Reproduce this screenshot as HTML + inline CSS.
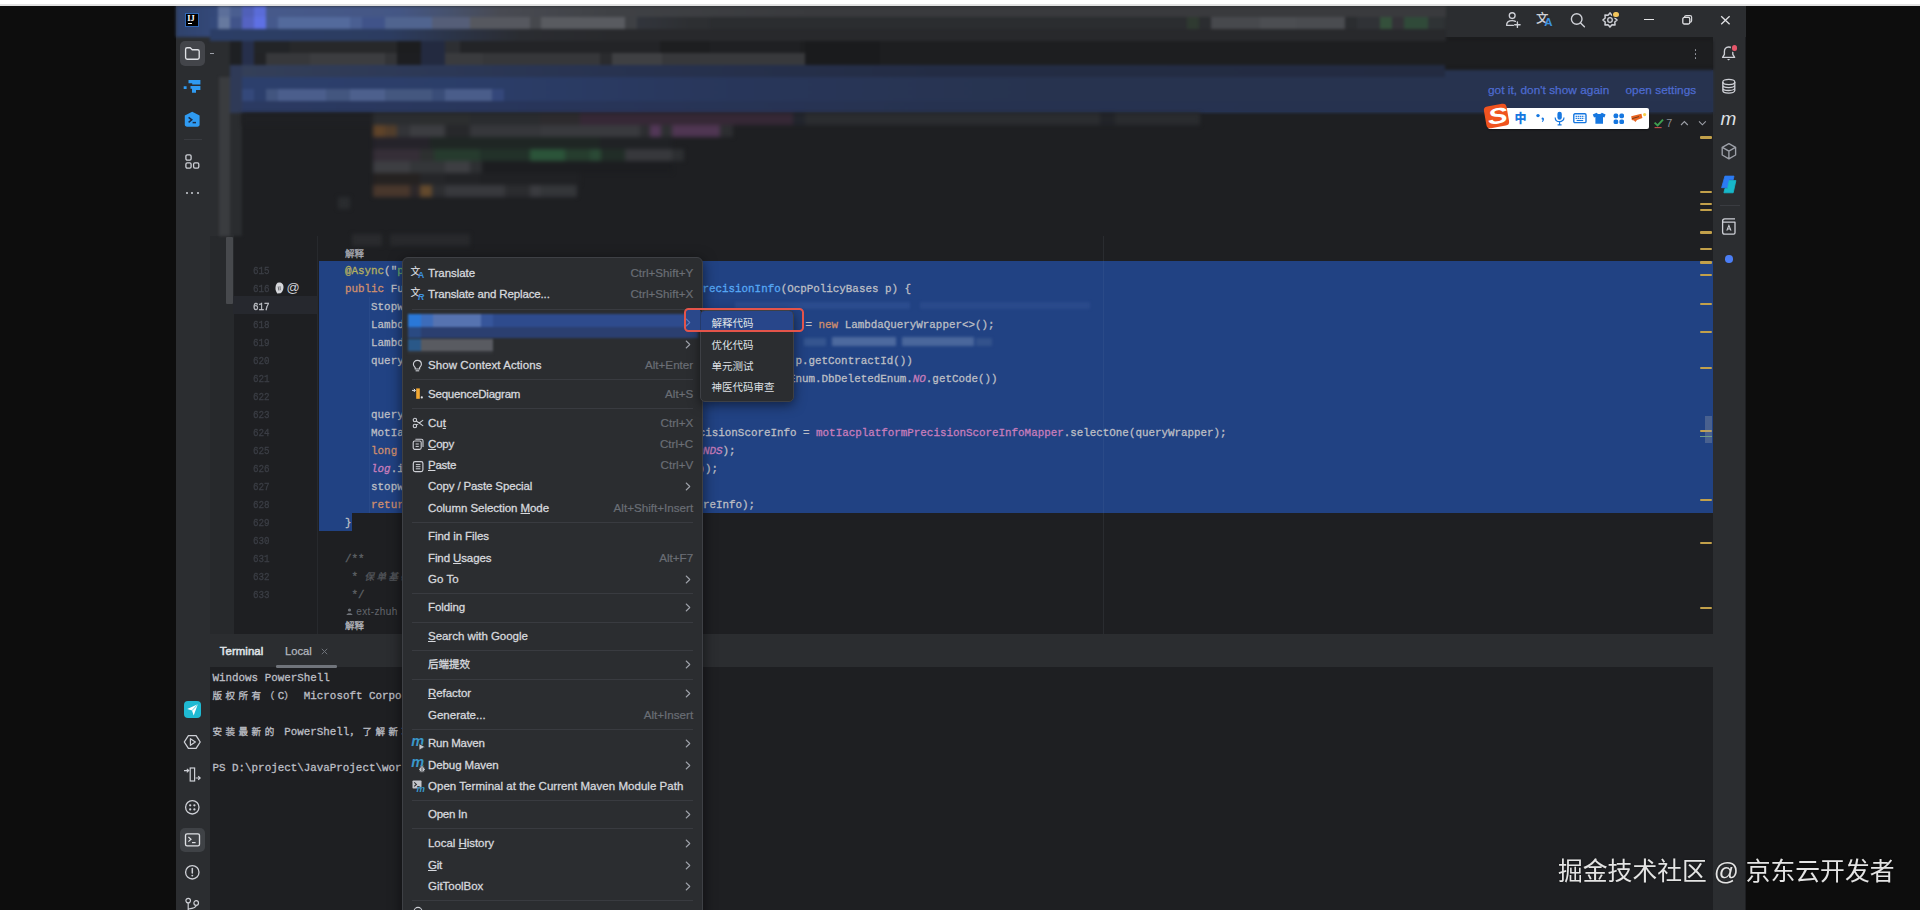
<!DOCTYPE html><html lang="zh"><head><meta charset="utf-8"><title>IDE</title><style>html,body{margin:0;padding:0}
body{width:1920px;height:910px;background:#0d0d0d;overflow:hidden;position:relative;font-family:"Liberation Sans","Noto Sans CJK SC",sans-serif;}
div,span,svg{position:absolute;box-sizing:border-box}
.t{white-space:pre;line-height:1}
.mono{font-family:"Liberation Mono","Noto Sans CJK SC",monospace;font-size:10.87px;white-space:pre;line-height:18px;height:18px;color:#bcbec4;-webkit-text-stroke:.3px}
.mi{font-size:11.5px;color:#d6d8dd;-webkit-text-stroke:.3px #d6d8dd;white-space:pre;line-height:14px;height:14px;left:428px}
.sc{font-size:11.65px;color:#6a6e75;-webkit-text-stroke:.2px #6a6e75;white-space:pre;line-height:14px;height:14px;right:1226.8px;text-align:right}
.sep{left:412px;width:281px;height:1px;background:#393b40}
.ln{font-family:"Liberation Mono",monospace;font-size:11px;color:#3f434a;left:252.6px;line-height:18px;height:18px;white-space:pre;transform:scaleX(.84);transform-origin:left center;margin-top:.6px;-webkit-text-stroke:.3px}
u{text-decoration-thickness:1px;text-underline-offset:1px}
</style></head><body>
<div id="all" style="left:0;top:0;width:1920px;height:910px;filter:blur(.35px)">
<div  style="left:175.5px;top:5.5px;width:1570px;height:905px;background:#1e1f22;"></div>
<div  style="left:175.5px;top:5.5px;width:1570px;height:31.5px;background:#2b2d30;"></div>
<div  style="left:175.5px;top:37px;width:34px;height:873px;background:#2b2d30;"></div>
<div  style="left:1712.5px;top:37px;width:32.5px;height:873px;background:#2b2d30;"></div>
<div  style="left:209.5px;top:37px;width:24px;height:597px;background:#2b2d30;"></div>
<div  style="left:210px;top:236px;width:23.5px;height:397.5px;background:#27292c;"></div>
<div  style="left:233px;top:37px;width:1479.5px;height:33px;background:#1b1c1e;"></div>
<div  style="left:233px;top:70px;width:1479.5px;height:42px;background:#27334f;"></div>
<div style="left:0;top:0;width:1920px;height:260px;filter:blur(1.8px)">
<div style="left:209.5px;top:5.5px;width:1236px;height:11.5px;background:linear-gradient(90deg,#364b7c 0,#46598a 60px,#445684 190px,#46526f 235px,#484a52 290px,#3f4145 400px,#393a3d 600px,#393a3d 100%)"></div>
<div  style="left:217.5px;top:5.5px;width:12.5px;height:11.5px;background:#5c6f9a;"></div>
<div  style="left:230px;top:5.5px;width:12px;height:11.5px;background:#4a5e90;"></div>
<div  style="left:242px;top:5.5px;width:12px;height:11.5px;background:#5060b8;"></div>
<div  style="left:254px;top:5.5px;width:12px;height:11.5px;background:#5a6cd8;"></div>
<div style="left:175.5px;top:5.5px;width:42px;height:31.5px;background:linear-gradient(90deg,#2f426b,#34497a)"></div>
<div style="left:209.5px;top:17px;width:500px;height:12px;background:linear-gradient(90deg,#34497a 0,#3a4f80 200px,#3a3f4e 330px,#2d2f32 480px)"></div>
<div  style="left:217.5px;top:17px;width:12.5px;height:12px;background:#66799f;"></div>
<div  style="left:230px;top:17px;width:12px;height:12px;background:#41548a;"></div>
<div  style="left:242px;top:17px;width:12px;height:12px;background:#5563c2;"></div>
<div  style="left:254px;top:17px;width:12px;height:12px;background:#5e70e4;"></div>
<div  style="left:266px;top:17px;width:11.5px;height:12px;background:#45598c;"></div>
<div  style="left:277.5px;top:17px;width:72.5px;height:12px;background:#536a9c;"></div>
<div  style="left:350px;top:17px;width:12px;height:12px;background:#4a5f92;"></div>
<div  style="left:362px;top:17px;width:23px;height:12px;background:#405389;"></div>
<div  style="left:385px;top:17px;width:47px;height:12px;background:#50648f;"></div>
<div  style="left:432px;top:17px;width:38px;height:12px;background:#555e78;"></div>
<div  style="left:470px;top:17px;width:60px;height:12px;background:#56585f;"></div>
<div  style="left:530px;top:17px;width:11px;height:12px;background:#46484d;"></div>
<div  style="left:541px;top:17px;width:84px;height:12px;background:#595b60;"></div>
<div  style="left:625px;top:17px;width:12px;height:12px;background:#3e4044;"></div>
<div  style="left:1187px;top:17px;width:12px;height:12px;background:#2f3a31;"></div>
<div  style="left:1211px;top:17px;width:49px;height:12px;background:#47494d;"></div>
<div  style="left:1260px;top:17px;width:36px;height:12px;background:#4c4e52;"></div>
<div  style="left:1296px;top:17px;width:49px;height:12px;background:#4a4c50;"></div>
<div  style="left:1357px;top:17px;width:23px;height:12px;background:#303236;"></div>
<div  style="left:1380px;top:17px;width:12px;height:12px;background:#34503b;"></div>
<div  style="left:1392px;top:17px;width:12px;height:12px;background:#333237;"></div>
<div  style="left:1404px;top:17px;width:24px;height:12px;background:#304a39;"></div>
<div  style="left:1428px;top:17px;width:17px;height:12px;background:#2f3335;"></div>
<div  style="left:500px;top:29px;width:946px;height:12px;background:#28292c;"></div>
<div style="left:209.5px;top:29px;width:700px;height:12px;background:linear-gradient(90deg,#2c3e66 0,#2c3c60 180px,#2b3345 250px,#2a2c31 310px,#28292c 400px)"></div>
<div  style="left:233px;top:41px;width:1479.5px;height:12px;background:#1d1e20;"></div>
<div  style="left:230px;top:41px;width:12px;height:12px;background:#1e2023;"></div>
<div  style="left:242px;top:41px;width:12px;height:12px;background:#262f4b;"></div>
<div  style="left:254px;top:41px;width:36px;height:12px;background:#222427;"></div>
<div  style="left:290px;top:41px;width:107px;height:12px;background:#27282a;"></div>
<div  style="left:397px;top:41px;width:24px;height:12px;background:#1c1d1f;"></div>
<div  style="left:421px;top:41px;width:24px;height:12px;background:#232a40;"></div>
<div  style="left:445px;top:41px;width:15px;height:12px;background:#2d2f33;"></div>
<div  style="left:460px;top:41px;width:200px;height:12px;background:#232427;"></div>
<div  style="left:710px;top:41px;width:90px;height:12px;background:#1f2023;"></div>
<div  style="left:805px;top:41px;width:75px;height:12px;background:#1a1b1d;"></div>
<div  style="left:233px;top:53px;width:1479.5px;height:12px;background:#1d1e20;"></div>
<div  style="left:230px;top:53px;width:12px;height:12px;background:#1e2023;"></div>
<div  style="left:242px;top:53px;width:12px;height:12px;background:#262f4b;"></div>
<div  style="left:254px;top:53px;width:12px;height:12px;background:#222326;"></div>
<div  style="left:266px;top:53px;width:44px;height:12px;background:#37383b;"></div>
<div  style="left:310px;top:53px;width:75px;height:12px;background:#3c3d40;"></div>
<div  style="left:385px;top:53px;width:12px;height:12px;background:#333437;"></div>
<div  style="left:397px;top:53px;width:24px;height:12px;background:#1d1e21;"></div>
<div  style="left:421px;top:53px;width:24px;height:12px;background:#232a40;"></div>
<div  style="left:445px;top:53px;width:37px;height:12px;background:#3a3b3e;"></div>
<div  style="left:482px;top:53px;width:118px;height:12px;background:#36373a;"></div>
<div  style="left:600px;top:53px;width:12px;height:12px;background:#2a2b2e;"></div>
<div  style="left:612px;top:53px;width:50px;height:12px;background:#3f4043;"></div>
<div  style="left:662px;top:53px;width:38px;height:12px;background:#37383b;"></div>
<div  style="left:700px;top:53px;width:105px;height:12px;background:#38393c;"></div>
<div  style="left:805px;top:53px;width:75px;height:12px;background:#1a1b1d;"></div>
<div style="left:233px;top:65px;width:1479.5px;height:12px;background:linear-gradient(90deg,#343f58 0,#2c3856 200px,#27324f 400px,#232c44 700px,#222a3f 100%)"></div>
<div style="left:1445px;top:65px;width:267.5px;height:5px;background:#1b1c1e"></div>
<div style="left:1445px;top:70px;width:267.5px;height:7px;background:#27334f"></div>
<div style="left:233px;top:77px;width:1479.5px;height:35.5px;background:linear-gradient(90deg,#2c3f6c 0,#2b3d68 250px,#28365a 500px,#27334f 800px)"></div>
<div  style="left:242px;top:89px;width:12px;height:12px;background:#34487a;"></div>
<div  style="left:266px;top:89px;width:12px;height:12px;background:#42557f;"></div>
<div  style="left:278px;top:89px;width:48px;height:12px;background:#4b5e8c;"></div>
<div  style="left:326px;top:89px;width:24px;height:12px;background:#43567f;"></div>
<div  style="left:350px;top:89px;width:35px;height:12px;background:#4d608d;"></div>
<div  style="left:385px;top:89px;width:47px;height:12px;background:#44577f;"></div>
<div  style="left:432px;top:89px;width:13px;height:12px;background:#3a4d78;"></div>
<div  style="left:445px;top:89px;width:47px;height:12px;background:#4a5d8a;"></div>
<div  style="left:492px;top:89px;width:12px;height:12px;background:#34477a;"></div>
<div style="left:233px;top:101px;width:1479.5px;height:11.5px;background:linear-gradient(90deg,#2b3a62 0,#28355a 300px,#263250 700px,#26324e 100%)"></div>
<div  style="left:218.5px;top:77px;width:11.5px;height:159px;background:#3a3c3f;"></div>
<div  style="left:230px;top:65px;width:12px;height:48px;background:#2f3a57;"></div>
<div  style="left:230px;top:113px;width:12px;height:123px;background:#2a2c2f;"></div>
</div>
<div style="left:0;top:0;width:1920px;height:260px;filter:blur(1.9px)">
<div  style="left:242px;top:113px;width:131px;height:12px;background:#1f2023;"></div>
<div  style="left:373px;top:113px;width:47px;height:12px;background:#2b2d30;"></div>
<div  style="left:420px;top:113px;width:50px;height:12px;background:#2c2e2f;"></div>
<div  style="left:470px;top:113px;width:70px;height:12px;background:#2a2c2f;"></div>
<div  style="left:540px;top:113px;width:40px;height:12px;background:#2d2b2e;"></div>
<div  style="left:580px;top:113px;width:213px;height:12px;background:#362836;"></div>
<div  style="left:793px;top:113px;width:12px;height:12px;background:#22252d;"></div>
<div  style="left:805px;top:113px;width:295px;height:12px;background:#2b2d30;"></div>
<div  style="left:1100px;top:113px;width:15px;height:12px;background:#222429;"></div>
<div  style="left:1115px;top:113px;width:85px;height:12px;background:#2a2c2f;"></div>
<div  style="left:373px;top:125px;width:12px;height:12px;background:#5f4329;"></div>
<div  style="left:385px;top:125px;width:12px;height:12px;background:#513d2b;"></div>
<div  style="left:397px;top:125px;width:13px;height:12px;background:#333438;"></div>
<div  style="left:410px;top:125px;width:35px;height:12px;background:#3c3d41;"></div>
<div  style="left:445px;top:125px;width:25px;height:12px;background:#27282b;"></div>
<div  style="left:470px;top:125px;width:71px;height:12px;background:#36373b;"></div>
<div  style="left:541px;top:125px;width:99px;height:12px;background:#393a3e;"></div>
<div  style="left:640px;top:125px;width:10px;height:12px;background:#2d2e31;"></div>
<div  style="left:650px;top:125px;width:11px;height:12px;background:#523757;"></div>
<div  style="left:661px;top:125px;width:11px;height:12px;background:#2e3032;"></div>
<div  style="left:672px;top:125px;width:48px;height:12px;background:#4f3652;"></div>
<div  style="left:720px;top:125px;width:13px;height:12px;background:#2d2e31;"></div>
<div  style="left:373px;top:137px;width:57px;height:12px;background:#25232a;"></div>
<div  style="left:430px;top:137px;width:170px;height:12px;background:#1f2624;"></div>
<div  style="left:600px;top:137px;width:72px;height:12px;background:#202225;"></div>
<div  style="left:373px;top:149px;width:47px;height:12px;background:#352e37;"></div>
<div  style="left:420px;top:149px;width:14px;height:12px;background:#2d3030;"></div>
<div  style="left:434px;top:149px;width:46px;height:12px;background:#263b2e;"></div>
<div  style="left:480px;top:149px;width:50px;height:12px;background:#223129;"></div>
<div  style="left:530px;top:149px;width:35px;height:12px;background:#2b5439;"></div>
<div  style="left:565px;top:149px;width:25px;height:12px;background:#263d2e;"></div>
<div  style="left:590px;top:149px;width:11px;height:12px;background:#2a4935;"></div>
<div  style="left:601px;top:149px;width:24px;height:12px;background:#212d27;"></div>
<div  style="left:625px;top:149px;width:47px;height:12px;background:#37383c;"></div>
<div  style="left:672px;top:149px;width:12px;height:12px;background:#2d2f32;"></div>
<div  style="left:373px;top:161px;width:37px;height:12px;background:#3d3e42;"></div>
<div  style="left:410px;top:161px;width:35px;height:12px;background:#343639;"></div>
<div  style="left:445px;top:161px;width:25px;height:12px;background:#3d3e42;"></div>
<div  style="left:470px;top:161px;width:12px;height:12px;background:#2d2f32;"></div>
<div  style="left:482px;top:161px;width:190px;height:12px;background:#1c1d20;"></div>
<div  style="left:373px;top:173px;width:47px;height:12px;background:#252221;"></div>
<div  style="left:420px;top:173px;width:25px;height:12px;background:#252629;"></div>
<div  style="left:445px;top:173px;width:35px;height:12px;background:#222326;"></div>
<div  style="left:480px;top:173px;width:100px;height:12px;background:#202124;"></div>
<div  style="left:373px;top:185px;width:37px;height:12px;background:#48372c;"></div>
<div  style="left:410px;top:185px;width:10px;height:12px;background:#2d282a;"></div>
<div  style="left:420px;top:185px;width:12px;height:12px;background:#63492d;"></div>
<div  style="left:432px;top:185px;width:13px;height:12px;background:#2d2e31;"></div>
<div  style="left:445px;top:185px;width:60px;height:12px;background:#38393d;"></div>
<div  style="left:505px;top:185px;width:25px;height:12px;background:#2b2c2f;"></div>
<div  style="left:530px;top:185px;width:11px;height:12px;background:#3a3b3f;"></div>
<div  style="left:541px;top:185px;width:36px;height:12px;background:#343639;"></div>
<div  style="left:338px;top:197px;width:12px;height:12px;background:#2a2c2f;"></div>
<div  style="left:352px;top:234px;width:30px;height:12px;background:#2a2b2e;"></div>
<div  style="left:390px;top:234px;width:80px;height:12px;background:#28292c;"></div>
</div>
<div  style="left:0px;top:0px;width:1920px;height:4px;background:#ffffff;"></div>
<div  style="left:0px;top:3.5px;width:1920px;height:2px;background:#e2e2e2;"></div>
<div  style="left:233px;top:296.4px;width:85.2px;height:18px;background:#26282e;"></div>
<div  style="left:316.8px;top:236px;width:1px;height:397.5px;background:#27292d;"></div>
<div  style="left:225.6px;top:237px;width:7px;height:66.6px;background:#47494d;border-radius:1px"></div>
<div  style="left:318.5px;top:260.5px;width:1394px;height:252.5px;background:#214283;"></div>
<div  style="left:318.5px;top:513px;width:33.5px;height:18px;background:#214283;"></div>
<div  style="left:1103px;top:236px;width:1px;height:397.5px;background:#2a2c30;"></div>
<div  style="left:1103px;top:260.5px;width:1px;height:252.5px;background:#2a4a88;"></div>
<div  style="left:369.4px;top:296.5px;width:1px;height:216.0px;background:#284989;"></div>
<div class="ln" style="top:261.5px;color:#3b3e45">615</div>
<div class="ln" style="top:279.5px;color:#3b3e45">616</div>
<div class="ln" style="top:297.5px;color:#c3c5cb">617</div>
<div class="ln" style="top:315.5px;color:#3b3e45">618</div>
<div class="ln" style="top:333.5px;color:#3b3e45">619</div>
<div class="ln" style="top:351.5px;color:#3b3e45">620</div>
<div class="ln" style="top:369.5px;color:#3b3e45">621</div>
<div class="ln" style="top:387.5px;color:#3b3e45">622</div>
<div class="ln" style="top:405.5px;color:#3b3e45">623</div>
<div class="ln" style="top:423.5px;color:#3b3e45">624</div>
<div class="ln" style="top:441.5px;color:#3b3e45">625</div>
<div class="ln" style="top:459.5px;color:#3b3e45">626</div>
<div class="ln" style="top:477.5px;color:#3b3e45">627</div>
<div class="ln" style="top:495.5px;color:#3b3e45">628</div>
<div class="ln" style="top:513.5px;color:#3b3e45">629</div>
<div class="ln" style="top:531.5px;color:#3b3e45">630</div>
<div class="ln" style="top:549.5px;color:#3b3e45">631</div>
<div class="ln" style="top:567.5px;color:#3b3e45">632</div>
<div class="ln" style="top:585.5px;color:#3b3e45">633</div>
<svg style="left:274px;top:282px" width="11" height="12" viewBox="0 0 11 12"><path d="M5 0.5 C8 0.5 9.8 2.5 9.5 5.5 C9.3 8 8.5 10 6.5 11.3 L3.2 11.5 C2.5 9.5 1.2 8.5 1.5 5.5 C1.7 2.5 2.8 0.5 5 0.5Z" fill="#d5d6da"/><path d="M4.2 4.5 l0.6 4 M6 4.2 l0.3 4" stroke="#55575c" stroke-width="0.8"/></svg>
<div class="t" style="left:286.5px;top:281px;font-size:13px;color:#ced0d6;font-family:'Liberation Sans',sans-serif">@</div>
<div class="t" style="left:345px;top:249.2px;font-size:9.5px;color:#a9abb2;-webkit-text-stroke:.3px;font-family:'Liberation Sans','Noto Sans CJK SC',sans-serif">解释</div>
<div class="t" style="left:345px;top:620.6px;font-size:9.5px;color:#b4b6bc;-webkit-text-stroke:.3px;font-family:'Liberation Sans','Noto Sans CJK SC',sans-serif">解释</div>
<svg style="left:346px;top:608px" width="7" height="7" viewBox="0 0 7 7"><circle cx="3.5" cy="2" r="1.6" fill="#6f737a"/><path d="M0.5 7 C0.5 4.5 6.5 4.5 6.5 7Z" fill="#6f737a"/></svg>
<div class="t" style="left:356.2px;top:607px;font-size:10px;color:#63666c;letter-spacing:.4px">ext-zhuh</div>
<div class="mono" style="left:345.00px;top:261.5px"><span style="position:static;color:#b3ae60;">@Async</span>(&quot;<span style="position:static;color:#6aab73;">precisionExecutor</span></div>
<div class="mono" style="left:345.00px;top:279.5px"><span style="position:static;color:#cf8e6d;">public</span> Future&lt;Mot</div>
<div class="mono" style="left:371.08px;top:297.5px">Stopwatch sw</div>
<div class="mono" style="left:371.08px;top:315.5px">LambdaQuery</div>
<div class="mono" style="left:371.08px;top:333.5px">LambdaQuery</div>
<div class="mono" style="left:371.08px;top:351.5px">queryWrapp</div>
<div class="mono" style="left:371.08px;top:405.5px">queryWrapp</div>
<div class="mono" style="left:371.08px;top:423.5px">MotIacplat</div>
<div class="mono" style="left:371.08px;top:441.5px"><span style="position:static;color:#cf8e6d;">long</span> cost</div>
<div class="mono" style="left:371.08px;top:459.5px"><span style="position:static;color:#c77dbb;font-style:italic;">log</span>.info(</div>
<div class="mono" style="left:371.08px;top:477.5px">stopwatch</div>
<div class="mono" style="left:371.08px;top:495.5px"><span style="position:static;color:#cf8e6d;">return</span> new</div>
<div class="mono" style="left:345.00px;top:513.5px">}</div>
<div class="mono" style="left:345.00px;top:549.5px"><span style="position:static;color:#5e6266;">/**</span></div>
<div class="mono" style="left:345.00px;top:567.5px"><span style="position:static;color:#5e6266;"> * </span><i style="color:#53565b;font-size:9.5px;letter-spacing:2.5px">保单基础信息</i></div>
<div class="mono" style="left:345.00px;top:585.5px"><span style="position:static;color:#5e6266;"> */</span></div>
<div class="mono" style="left:695.98px;top:279.5px"><span style="position:static;color:#56a8f5;">PrecisionInfo</span>(OcpPolicyBases p) {</div>
<div class="mono" style="left:805.50px;top:315.5px">= <span style="position:static;color:#cf8e6d;">new</span> LambdaQueryWrapper&lt;&gt;();</div>
<div class="mono" style="left:795.50px;top:351.5px">p.getContractId())</div>
<div class="mono" style="left:788.98px;top:369.5px">Enum.DbDeletedEnum.<span style="position:static;color:#c77dbb;font-style:italic;">NO</span>.getCode())</div>
<div class="mono" style="left:698.78px;top:423.5px">cisionScoreInfo = <span style="position:static;color:#c77dbb;">motIacplatformPrecisionScoreInfoMapper</span>.selectOne(queryWrapper);</div>
<div class="mono" style="left:696.48px;top:441.5px"><span style="position:static;color:#c77dbb;font-style:italic;">ONDS</span>);</div>
<div class="mono" style="left:698.50px;top:459.5px">));</div>
<div class="mono" style="left:696.48px;top:495.5px">oreInfo);</div>
<div style="left:0;top:0;width:1920px;height:520px;filter:blur(1.6px)">
<div  style="left:735px;top:302px;width:175px;height:7px;background:#2b4c8e;"></div>
<div  style="left:920px;top:302px;width:170px;height:7px;background:#2a4a8b;"></div>
<div  style="left:804px;top:338px;width:22px;height:8px;background:#35558f;"></div>
<div  style="left:832px;top:337px;width:64px;height:9px;background:#4d6a9f;"></div>
<div  style="left:902px;top:337px;width:72px;height:9px;background:#4a679c;"></div>
<div  style="left:976px;top:338px;width:16px;height:8px;background:#33528c;"></div>
</div>
<div  style="left:209.5px;top:633.5px;width:1503px;height:33.3px;background:#2b2d30;"></div>
<div  style="left:209.5px;top:666.8px;width:1503px;height:243.2px;background:#1e1f22;"></div>
<div class="t" style="left:219.8px;top:645.8px;font-size:11.4px;color:#dfe1e5;-webkit-text-stroke:.55px #dfe1e5;letter-spacing:.05px">Terminal</div>
<div class="t" style="left:285px;top:646px;font-size:11.2px;color:#b4b8bf;-webkit-text-stroke:.25px">Local</div>
<svg style="left:320.8px;top:648.4px" width="7" height="7" viewBox="0 0 7 7"><path d="M0.8 0.8 L6.2 6.2 M6.2 0.8 L0.8 6.2" stroke="#6f737a" stroke-width="1"/></svg>
<div  style="left:276.2px;top:665.3px;width:60.7px;height:2.6px;background:#70747b;border-radius:1.3px"></div>
<div class="mono" style="left:212.5px;top:668.8px;color:#bcbec4">Windows PowerShell</div>
<div class="mono" style="left:212.5px;top:686.8px;color:#bcbec4"><span style="position:static;font-size:9.5px;letter-spacing:3.54px">版权所有（</span>C<span style="position:static;font-size:9.5px;letter-spacing:3.54px">）</span> Microsoft Corporation</div>
<div class="mono" style="left:212.5px;top:722.8px;color:#bcbec4"><span style="position:static;font-size:9.5px;letter-spacing:3.54px">安装最新的</span> PowerShell<span style="position:static;font-size:9.5px;letter-spacing:3.54px">，了解新功能</span></div>
<div class="mono" style="left:212.5px;top:758.8px;color:#bcbec4">PS D:\project\JavaProject\work</div>
<div style="left:185px;top:13px;width:14px;height:14px;background:#000;border:1px solid #2f66b5"></div>
<div class="t" style="left:187.3px;top:14.8px;font-size:8.4px;font-weight:bold;color:#fff;font-family:'Liberation Serif',serif;letter-spacing:-.1px">IJ</div>
<div  style="left:187.5px;top:22.6px;width:4.5px;height:1.2px;background:#fff;"></div>
<div  style="left:180px;top:41px;width:25px;height:25px;background:#43454a;border-radius:5px"></div>
<svg style="left:184px;top:46px" width="17" height="15" viewBox="0 0 17 15"><path d="M1.6 3.2 C1.6 2.3 2.3 1.7 3.1 1.7 H6.2 L8.2 3.7 H13.6 C14.5 3.7 15.2 4.4 15.2 5.2 V11.6 C15.2 12.5 14.5 13.2 13.6 13.2 H3.1 C2.3 13.2 1.6 12.5 1.6 11.6 Z" fill="none" stroke="#dfe1e5" stroke-width="1.35" stroke-linejoin="round"/></svg>
<div  style="left:210px;top:53px;width:3.5px;height:1.2px;background:#9da0a8;"></div>
<svg style="left:183px;top:79px" width="18" height="15" viewBox="0 0 18 15"><path d="M5.5 1 H17.4 V5.6 H9.2 V4.2 H5.5 Z M7.5 7 H17.4 V11 H13 V13.8 H9 V9.8 H7.5 Z M0.7 7.2 H3.6 V10 H0.7 Z" fill="#2f9bf2"/></svg>
<svg style="left:184px;top:111px" width="17" height="17" viewBox="0 0 17 17"><path d="M8.2 0.8 L15.6 4.6 V13.6 C15.6 14.9 14.7 15.8 13.4 15.8 H3 C1.7 15.8 0.8 14.9 0.8 13.6 V4.6 Z" fill="#2f9bf2"/><path d="M4.6 6.3 L7.8 8.8 L4.6 11.3" fill="none" stroke="#1c2b45" stroke-width="1.5"/><path d="M8.6 11.6 H12" stroke="#1c2b45" stroke-width="1.5"/></svg>
<div  style="left:183.5px;top:139px;width:18.5px;height:1px;background:#393b40;"></div>
<svg style="left:184px;top:152.5px" width="17" height="17" viewBox="0 0 17 17"><rect x="1.9" y="1.9" width="5.2" height="5.2" rx="1.3" fill="none" stroke="#ced0d6" stroke-width="1.3"/><rect x="1.9" y="9.9" width="5.2" height="5.2" rx="1.3" fill="none" stroke="#ced0d6" stroke-width="1.3"/><rect x="9.6" y="9.9" width="5.2" height="5.2" rx="1.3" fill="none" stroke="#ced0d6" stroke-width="1.3"/></svg>
<div style="left:185.5px;top:192.3px;width:2.2px;height:2.2px;border-radius:50%;background:#ced0d6"></div>
<div style="left:191.0px;top:192.3px;width:2.2px;height:2.2px;border-radius:50%;background:#ced0d6"></div>
<div style="left:196.5px;top:192.3px;width:2.2px;height:2.2px;border-radius:50%;background:#ced0d6"></div>
<div  style="left:183.5px;top:700.5px;width:17px;height:17px;background:#1fbad3;border-radius:4px"></div>
<svg style="left:183.5px;top:700.5px" width="17" height="17" viewBox="0 0 17 17"><path d="M13.8 3.3 L3.2 7.9 L8 9.6 L9.7 14.4 Z" fill="#fff"/><path d="M13.8 3.3 L8 9.6" stroke="#1fbad3" stroke-width="0.7"/></svg>
<svg style="left:183px;top:733.5px" width="18.5" height="16" viewBox="0 0 18.5 16"><path d="M5.4 1.6 H13.1 L17.2 8 L13.1 14.4 H5.4 L1.3 8 Z" fill="none" stroke="#ced0d6" stroke-width="1.3" stroke-linejoin="round"/><path d="M7.4 4.7 L12.4 8 L7.4 11.3 Z" fill="none" stroke="#ced0d6" stroke-width="1.2" stroke-linejoin="round"/></svg>
<svg style="left:183px;top:766px" width="18.5" height="17" viewBox="0 0 18.5 17"><rect x="7.2" y="2" width="4.4" height="13" fill="none" stroke="#ced0d6" stroke-width="1.2"/><path d="M1 4.6 H5.6 M3.8 2.8 L5.8 4.6 L3.8 6.4" fill="none" stroke="#ced0d6" stroke-width="1.1"/><path d="M12.6 12 H17 M15.2 10.2 L17.2 12 L15.2 13.8" fill="none" stroke="#ced0d6" stroke-width="1.1"/></svg>
<svg style="left:184px;top:799px" width="17" height="17" viewBox="0 0 17 17"><circle cx="8.3" cy="8.3" r="6.7" fill="none" stroke="#ced0d6" stroke-width="1.3"/><g fill="#ced0d6"><circle cx="6.2" cy="6.3" r="1.15"/><circle cx="10.4" cy="6.3" r="1.15"/><circle cx="6.2" cy="10.4" r="1.15"/><circle cx="10.4" cy="10.4" r="1.15"/></g></svg>
<div  style="left:180px;top:827.5px;width:24.5px;height:24.5px;background:#3f4246;border-radius:5px"></div>
<svg style="left:184px;top:832px" width="17" height="16" viewBox="0 0 17 16"><rect x="1.5" y="1.8" width="14" height="12" rx="1.6" fill="none" stroke="#dfe1e5" stroke-width="1.35"/><path d="M4.4 5 L7 7.3 L4.4 9.6" fill="none" stroke="#dfe1e5" stroke-width="1.2"/><path d="M8 10.6 H11.6" stroke="#dfe1e5" stroke-width="1.2"/></svg>
<svg style="left:184px;top:863.5px" width="17" height="17" viewBox="0 0 17 17"><circle cx="8.3" cy="8.3" r="6.7" fill="none" stroke="#ced0d6" stroke-width="1.3"/><path d="M8.3 4.4 V9" stroke="#ced0d6" stroke-width="1.5" stroke-linecap="round"/><circle cx="8.3" cy="11.6" r="0.95" fill="#ced0d6"/></svg>
<svg style="left:184px;top:896px" width="17" height="14" viewBox="0 0 17 14"><circle cx="4.2" cy="4.6" r="2.3" fill="none" stroke="#ced0d6" stroke-width="1.2"/><circle cx="12.2" cy="7" r="2.3" fill="none" stroke="#ced0d6" stroke-width="1.2"/><path d="M4.2 7 V14 M12.2 9.3 C12.2 12 8 12.6 4.6 13" fill="none" stroke="#ced0d6" stroke-width="1.2"/></svg>
<svg style="left:1504px;top:11px" width="18" height="18" viewBox="0 0 18 18"><circle cx="8.2" cy="4.6" r="2.9" fill="none" stroke="#ced0d6" stroke-width="1.35"/><path d="M2.6 14.3 C2.6 10.4 5.4 9.6 8.2 9.6 C9.6 9.6 10.6 9.9 11.4 10.4 M2.6 14.3 H9.4" fill="none" stroke="#ced0d6" stroke-width="1.35" stroke-linecap="round"/><path d="M13.4 11 V16.4 M10.7 13.7 H16.1" stroke="#ced0d6" stroke-width="1.35" stroke-linecap="round"/></svg>
<div class="t" style="left:1536px;top:12px;font-size:12.5px;color:#ced0d6;font-family:'Noto Sans CJK SC',sans-serif;font-weight:500">文</div>
<div class="t" style="left:1544.3px;top:17.2px;font-size:11.5px;color:#3d93e0;font-weight:bold;font-family:'Liberation Sans',sans-serif;text-shadow:0 0 1.5px #2b2d30">A</div>
<svg style="left:1568px;top:10px" width="18" height="18" viewBox="0 0 18 18"><circle cx="8.7" cy="9" r="5.3" fill="none" stroke="#ced0d6" stroke-width="1.4"/><path d="M12.6 12.9 L16.4 16.7" stroke="#ced0d6" stroke-width="1.4" stroke-linecap="round"/></svg>
<svg style="left:1601px;top:11px" width="18" height="18" viewBox="0 0 18 18"><path d="M9.00 1.90 L10.99 4.20 L14.02 3.98 L13.80 7.01 L16.10 9.00 L13.80 10.99 L14.02 14.02 L10.99 13.80 L9.00 16.10 L7.01 13.80 L3.98 14.02 L4.20 10.99 L1.90 9.00 L4.20 7.01 L3.98 3.98 L7.01 4.20Z" fill="none" stroke="#ced0d6" stroke-width="1.5" stroke-linejoin="round"/><circle cx="9" cy="9" r="2.3" fill="none" stroke="#ced0d6" stroke-width="1.3"/></svg>
<div style="left:1613.2px;top:11.7px;width:5.6px;height:5.6px;border-radius:50%;background:#f2c55c;box-shadow:0 0 0 1px #2b2d30"></div>
<div  style="left:1644px;top:18.8px;width:9.5px;height:1.4px;background:#e4e4e6;"></div>
<svg style="left:1681px;top:14px" width="13" height="12" viewBox="0 0 13 12"><rect x="3.6" y="1.6" width="7" height="6.6" rx="1.5" fill="none" stroke="#d6d7da" stroke-width="1.2"/><rect x="1.8" y="3.4" width="7" height="6.6" rx="1.5" fill="#2b2d30" stroke="#e0e1e4" stroke-width="1.3"/></svg>
<svg style="left:1720px;top:15px" width="11" height="11" viewBox="0 0 11 11"><path d="M1.2 1.2 L9.6 9.2 M9.6 1.2 L1.2 9.2" stroke="#e0e1e4" stroke-width="1.3"/></svg>
<div style="left:1694.7px;top:49.1px;width:1.8px;height:1.8px;border-radius:50%;background:#9da0a8"></div>
<div style="left:1694.7px;top:53.1px;width:1.8px;height:1.8px;border-radius:50%;background:#9da0a8"></div>
<div style="left:1694.7px;top:57.1px;width:1.8px;height:1.8px;border-radius:50%;background:#9da0a8"></div>
<div class="t" style="left:1488px;top:84.5px;font-size:11.8px;color:#4d6bd0;-webkit-text-stroke:.25px;letter-spacing:.04px">got it, don't show again</div>
<div class="t" style="left:1625.5px;top:84.5px;font-size:11.8px;color:#4d6bd0;-webkit-text-stroke:.25px;letter-spacing:.04px">open settings</div>
<svg style="left:1720px;top:45px" width="18" height="17" viewBox="0 0 18 17"><path d="M8.6 2 C5.6 2 4.4 4.2 4.4 6.6 V9.4 L2.6 12.4 H14.6 L12.8 9.4 V6.6 C12.8 4.2 11.6 2 8.6 2Z" fill="none" stroke="#ced0d6" stroke-width="1.35" stroke-linejoin="round"/><path d="M7 14 L8.6 15.6 L10.2 14Z" fill="#ced0d6"/></svg>
<div style="left:1731.7px;top:45.4px;width:5.4px;height:5.4px;border-radius:50%;background:#e5566a;box-shadow:0 0 0 1.2px #2b2d30"></div>
<svg style="left:1720px;top:78px" width="18" height="17" viewBox="0 0 18 17"><ellipse cx="8.8" cy="4" rx="6" ry="2.6" fill="none" stroke="#ced0d6" stroke-width="1.3"/><path d="M2.8 4 V12.6 C2.8 14 5.5 15.2 8.8 15.2 C12.1 15.2 14.8 14 14.8 12.6 V4 M2.8 7 C2.8 8.4 5.5 9.6 8.8 9.6 C12.1 9.6 14.8 8.4 14.8 7 M2.8 9.9 C2.8 11.3 5.5 12.5 8.8 12.5 C12.1 12.5 14.8 11.3 14.8 9.9" fill="none" stroke="#ced0d6" stroke-width="1.3"/></svg>
<div class="t" style="left:1720.6px;top:108.6px;font-size:19px;font-style:italic;color:#dfe1e5;font-family:'Liberation Sans',sans-serif">m</div>
<svg style="left:1720px;top:142px" width="18" height="19" viewBox="0 0 18 19"><path d="M8.9 1.6 L15.6 5.3 V13 L8.9 16.8 L2.2 13 V5.3 Z M2.4 5.4 L8.9 9.2 L15.4 5.4 M8.9 9.2 V16.6" fill="none" stroke="#9da0a8" stroke-width="1.35" stroke-linejoin="round"/></svg>
<svg style="left:1716px;top:170px" width="26" height="30" viewBox="0 0 26 30"><path d="M8.9 6.1 H18 L17.2 9.8 H13.4 L11.7 17.7 H5.6 Z" fill="#2b7bf3" stroke="#2b7bf3" stroke-width="0.8" stroke-linejoin="round"/><path d="M13.2 10.6 H19.9 L17.2 22.8 H7.9 L8.9 18.6 H11.5 Z" fill="#17b7c9" stroke="#17b7c9" stroke-width="0.8" stroke-linejoin="round"/></svg>
<div  style="left:1720px;top:205px;width:20px;height:1px;background:#3a3c41;"></div>
<svg style="left:1720px;top:217px" width="18" height="19" viewBox="0 0 18 19"><path d="M2.6 4 C2.6 2.7 3.5 1.8 4.8 1.8 H15 M2.6 4 V15 C2.6 16.3 3.5 17.2 4.8 17.2 H13.6 C14.5 17.2 15 16.7 15 15.8 V5.2 H4.4 C3.4 5.2 2.6 4.8 2.6 4" fill="none" stroke="#ced0d6" stroke-width="1.3" stroke-linejoin="round"/><path d="M6.8 13.6 L8.9 8.4 L11 13.6 M7.6 12 H10.2" fill="none" stroke="#ced0d6" stroke-width="1.1"/></svg>
<div style="left:1725px;top:255px;width:7.6px;height:7.6px;border-radius:50%;background:#4b7ef5"></div>
<div  style="left:1488px;top:107.6px;width:160.6px;height:21.2px;background:#ffffff;border-radius:2px;box-shadow:0 1px 2px rgba(0,0,0,.4)"></div>
<div style="left:1484.6px;top:105px;width:23px;height:22px;background:#f0531f;border-radius:4px;transform:rotate(-10deg)"></div>
<div class="t" style="left:1486.3px;top:105.6px;font-size:22px;font-weight:bold;font-style:italic;color:#fff;font-family:'Liberation Sans',sans-serif;transform:rotate(-8deg) scaleX(1.36);transform-origin:left top;line-height:23px">S</div>
<div class="t" style="left:1514.6px;top:111.2px;font-size:12px;font-weight:900;color:#1677e0;font-family:'Noto Sans CJK SC',sans-serif;line-height:14px">中</div>
<svg style="left:1535px;top:112px" width="12" height="12" viewBox="0 0 12 12"><circle cx="3" cy="3.6" r="1.7" fill="#1677e0"/><path d="M7.6 5.4 C9.4 5.4 9.6 8.4 7.4 10 L6.8 9.4 C7.8 8.6 7.8 7.8 7.2 7.6 C6.2 7.2 6.4 5.4 7.6 5.4Z" fill="#1677e0"/></svg>
<svg style="left:1553px;top:111px" width="13" height="15" viewBox="0 0 13 15"><rect x="4.4" y="0.8" width="4.4" height="8" rx="2.2" fill="#1677e0"/><path d="M2.2 6.4 C2.2 12 11 12 11 6.4 M6.6 10.8 V13.6 M4.6 13.8 H8.6" fill="none" stroke="#1677e0" stroke-width="1.2"/></svg>
<svg style="left:1573px;top:113px" width="14" height="11" viewBox="0 0 14 11"><rect x="0.8" y="0.8" width="12.2" height="8.8" rx="1.2" fill="none" stroke="#1677e0" stroke-width="1.4"/><path d="M2.6 3.4 H11.2 M2.6 5.4 H11.2" stroke="#1677e0" stroke-width="1.1" stroke-dasharray="1.3 0.7"/><path d="M3.6 7.5 H10.2" stroke="#1677e0" stroke-width="1.1"/></svg>
<svg style="left:1592px;top:112px" width="15" height="13" viewBox="0 0 15 13"><path d="M4.6 0.8 C5.4 2.4 9 2.4 9.8 0.8 L13.6 2.6 L12.4 5.6 L11 5 V11.8 H3.4 V5 L2 5.6 L0.8 2.6 Z" fill="#1677e0"/></svg>
<svg style="left:1613px;top:112.5px" width="12" height="12" viewBox="0 0 12 12"><rect x="0.6" y="0.6" width="4.6" height="4.6" rx="1.6" fill="#1677e0"/><rect x="6.4" y="0.6" width="4.6" height="4.6" rx="1.6" fill="#1677e0"/><rect x="0.6" y="6.4" width="4.6" height="4.6" rx="1.6" fill="#1677e0"/><rect x="6.4" y="6.4" width="4.6" height="4.6" rx="1.6" fill="#1677e0"/></svg>
<svg style="left:1630px;top:112px" width="19" height="12" viewBox="0 0 19 12"><path d="M1.2 4.2 L11.4 1.8 L12.4 6 L7 8 L5.4 10 L4 8.4 L1.8 8 Z" fill="#e8641f"/><path d="M2.2 6.6 L9 4.6" stroke="#7a3a18" stroke-width="1"/><circle cx="14.6" cy="2.6" r="1.6" fill="#f7d04a"/></svg>
<svg style="left:1653px;top:118px" width="12" height="11" viewBox="0 0 12 11"><path d="M1.6 4.6 L4.6 7.4 L10 1.6" fill="none" stroke="#3f9f50" stroke-width="1.9"/><path d="M1.6 9.6 H8.6" stroke="#c9504f" stroke-width="1.1"/></svg>
<div class="t" style="left:1666.2px;top:117.5px;font-size:10.8px;color:#8c8f96">7</div>
<svg style="left:1680px;top:119.5px" width="9" height="7" viewBox="0 0 9 7"><path d="M1 5 L4.4 1.6 L7.8 5" fill="none" stroke="#9da0a8" stroke-width="1.1"/></svg>
<svg style="left:1697.5px;top:120px" width="9" height="7" viewBox="0 0 9 7"><path d="M1 1.4 L4.4 4.8 L7.8 1.4" fill="none" stroke="#9da0a8" stroke-width="1.1"/></svg>
<div  style="left:1700px;top:136.3px;width:11.8px;height:2.3px;background:#c2a04a;border-radius:1px"></div>
<div  style="left:1700px;top:191.20000000000002px;width:11.8px;height:2.3px;background:#c2a04a;border-radius:1px"></div>
<div  style="left:1700px;top:202.5px;width:11.8px;height:2.3px;background:#c2a04a;border-radius:1px"></div>
<div  style="left:1700px;top:209.1px;width:11.8px;height:2.3px;background:#c2a04a;border-radius:1px"></div>
<div  style="left:1700px;top:231.4px;width:11.8px;height:2.3px;background:#c2a04a;border-radius:1px"></div>
<div  style="left:1700px;top:247.9px;width:11.8px;height:2.3px;background:#c2a04a;border-radius:1px"></div>
<div  style="left:1700px;top:261.29999999999995px;width:11.8px;height:2.3px;background:#c2a04a;border-radius:1px"></div>
<div  style="left:1700px;top:273.9px;width:11.8px;height:2.3px;background:#c2a04a;border-radius:1px"></div>
<div  style="left:1700px;top:302.9px;width:11.8px;height:2.3px;background:#c2a04a;border-radius:1px"></div>
<div  style="left:1700px;top:331.2px;width:11.8px;height:2.3px;background:#c2a04a;border-radius:1px"></div>
<div  style="left:1700px;top:366.59999999999997px;width:11.8px;height:2.3px;background:#c2a04a;border-radius:1px"></div>
<div  style="left:1700px;top:429.7px;width:11.8px;height:2.3px;background:#c2a04a;border-radius:1px"></div>
<div  style="left:1700px;top:499.2px;width:11.8px;height:2.3px;background:#c2a04a;border-radius:1px"></div>
<div  style="left:1700px;top:542.1999999999999px;width:11.8px;height:2.3px;background:#c2a04a;border-radius:1px"></div>
<div  style="left:1700px;top:606.9px;width:11.8px;height:2.3px;background:#c2a04a;border-radius:1px"></div>
<div  style="left:1704.5px;top:416px;width:7px;height:27px;background:rgba(150,155,165,.35);"></div>
<div  style="left:1700px;top:435.5px;width:11.8px;height:1.4px;background:#6f9a86;"></div>
<div style="left:401.5px;top:256.5px;width:301.5px;height:680px;background:#2b2d30;border:1px solid #3e4045;border-radius:6px;box-shadow:0 3px 14px rgba(0,0,0,.55)"></div>
<div class="mi" style="top:265.5px;letter-spacing:-0.05px">Translate</div>
<div class="sc" style="top:265.5px">Ctrl+Shift+Y</div>
<div class="mi" style="top:287.0px;letter-spacing:-0.13px">Translate and Replace...</div>
<div class="sc" style="top:287.0px">Ctrl+Shift+X</div>
<div class="sep" style="top:308.5px"></div>
<div style="left:402px;top:300px;width:300px;height:60px;overflow:hidden"><div style="left:0;top:0;width:300px;height:60px;filter:blur(1.3px)">
<div style="left:5.5px;top:14px;width:290px;height:13px;background:#2e4b8d"></div>
<div style="left:5.5px;top:27px;width:290px;height:10.5px;background:#2b3f70"></div>
<div style="left:5.5px;top:14px;width:13px;height:13px;background:#2a78d8"></div>
<div style="left:18.5px;top:14px;width:12px;height:13px;background:#3d6cba"></div>
<div style="left:30.5px;top:14px;width:48px;height:13px;background:#5673b0"></div>
<div style="left:78.5px;top:14px;width:12px;height:13px;background:#36559a"></div>
<div style="left:5.5px;top:27px;width:13px;height:10.5px;background:#2a4a82"></div>
<div style="left:5.5px;top:39px;width:13px;height:12px;background:#2a5888"></div>
<div style="left:18.5px;top:39px;width:72px;height:12px;background:#595b61"></div>
<div style="left:5.5px;top:51px;width:85px;height:3px;background:#323438"></div>
</div></div>
<svg style="left:684.5px;top:318.0px" width="6" height="9" viewBox="0 0 6 9"><path d="M1.2 1 L4.8 4.5 L1.2 8" fill="none" stroke="#6f8ac6" stroke-width="1.05" stroke-linecap="round" stroke-linejoin="round"/></svg>
<svg style="left:684.5px;top:340.0px" width="6" height="9" viewBox="0 0 6 9"><path d="M1.2 1 L4.8 4.5 L1.2 8" fill="none" stroke="#9fa2aa" stroke-width="1.05" stroke-linecap="round" stroke-linejoin="round"/></svg>
<div class="mi" style="top:358.0px;letter-spacing:0.08px">Show Context Actions</div>
<div class="sc" style="top:358.0px">Alt+Enter</div>
<div class="sep" style="top:379.0px"></div>
<div class="mi" style="top:386.5px;letter-spacing:-0.20px">SequenceDiagram</div>
<div class="sc" style="top:386.5px">Alt+S</div>
<div class="sep" style="top:408.0px"></div>
<div class="mi" style="top:415.5px;letter-spacing:-0.00px">Cu<u>t</u></div>
<div class="sc" style="top:415.5px">Ctrl+X</div>
<div class="mi" style="top:436.5px;letter-spacing:-0.19px"><u>C</u>opy</div>
<div class="sc" style="top:436.5px">Ctrl+C</div>
<div class="mi" style="top:458.0px;letter-spacing:-0.26px"><u>P</u>aste</div>
<div class="sc" style="top:458.0px">Ctrl+V</div>
<div class="mi" style="top:479.0px;letter-spacing:-0.13px">Copy / Paste Special</div>
<svg style="left:684.5px;top:482.0px" width="6" height="9" viewBox="0 0 6 9"><path d="M1.2 1 L4.8 4.5 L1.2 8" fill="none" stroke="#9fa2aa" stroke-width="1.05" stroke-linecap="round" stroke-linejoin="round"/></svg>
<div class="mi" style="top:500.5px;letter-spacing:-0.05px">Column Selection <u>M</u>ode</div>
<div class="sc" style="top:500.5px">Alt+Shift+Insert</div>
<div class="sep" style="top:521.8px"></div>
<div class="mi" style="top:529.0px;letter-spacing:-0.08px">Find in Files</div>
<div class="mi" style="top:550.5px;letter-spacing:-0.11px">Find <u>U</u>sages</div>
<div class="sc" style="top:550.5px">Alt+F7</div>
<div class="mi" style="top:571.5px;letter-spacing:0.04px">Go To</div>
<svg style="left:684.5px;top:574.5px" width="6" height="9" viewBox="0 0 6 9"><path d="M1.2 1 L4.8 4.5 L1.2 8" fill="none" stroke="#9fa2aa" stroke-width="1.05" stroke-linecap="round" stroke-linejoin="round"/></svg>
<div class="sep" style="top:593.0px"></div>
<div class="mi" style="top:600.0px;letter-spacing:-0.09px">Folding</div>
<svg style="left:684.5px;top:603.0px" width="6" height="9" viewBox="0 0 6 9"><path d="M1.2 1 L4.8 4.5 L1.2 8" fill="none" stroke="#9fa2aa" stroke-width="1.05" stroke-linecap="round" stroke-linejoin="round"/></svg>
<div class="sep" style="top:621.5px"></div>
<div class="mi" style="top:629.0px;letter-spacing:-0.03px"><u>S</u>earch with Google</div>
<div class="sep" style="top:650.0px"></div>
<div class="mi" style="top:657px;font-size:10.5px;font-family:'Liberation Sans','Noto Sans CJK SC',sans-serif">后端提效</div>
<svg style="left:684.5px;top:660.0px" width="6" height="9" viewBox="0 0 6 9"><path d="M1.2 1 L4.8 4.5 L1.2 8" fill="none" stroke="#9fa2aa" stroke-width="1.05" stroke-linecap="round" stroke-linejoin="round"/></svg>
<div class="sep" style="top:678.5px"></div>
<div class="mi" style="top:686.0px;letter-spacing:-0.06px"><u>R</u>efactor</div>
<svg style="left:684.5px;top:689.0px" width="6" height="9" viewBox="0 0 6 9"><path d="M1.2 1 L4.8 4.5 L1.2 8" fill="none" stroke="#9fa2aa" stroke-width="1.05" stroke-linecap="round" stroke-linejoin="round"/></svg>
<div class="mi" style="top:707.5px;letter-spacing:0.01px">Generate...</div>
<div class="sc" style="top:707.5px">Alt+Insert</div>
<div class="sep" style="top:728.5px"></div>
<div class="mi" style="top:736.0px;letter-spacing:-0.25px">Run Maven</div>
<svg style="left:684.5px;top:739.0px" width="6" height="9" viewBox="0 0 6 9"><path d="M1.2 1 L4.8 4.5 L1.2 8" fill="none" stroke="#9fa2aa" stroke-width="1.05" stroke-linecap="round" stroke-linejoin="round"/></svg>
<div class="mi" style="top:757.5px;letter-spacing:-0.09px">Debug Maven</div>
<svg style="left:684.5px;top:760.5px" width="6" height="9" viewBox="0 0 6 9"><path d="M1.2 1 L4.8 4.5 L1.2 8" fill="none" stroke="#9fa2aa" stroke-width="1.05" stroke-linecap="round" stroke-linejoin="round"/></svg>
<div class="mi" style="top:779.0px;letter-spacing:0.04px">Open Terminal at the Current Maven Module Path</div>
<div class="sep" style="top:800.0px"></div>
<div class="mi" style="top:807.0px;letter-spacing:-0.25px">Open In</div>
<svg style="left:684.5px;top:810.0px" width="6" height="9" viewBox="0 0 6 9"><path d="M1.2 1 L4.8 4.5 L1.2 8" fill="none" stroke="#9fa2aa" stroke-width="1.05" stroke-linecap="round" stroke-linejoin="round"/></svg>
<div class="sep" style="top:828.0px"></div>
<div class="mi" style="top:836.0px;letter-spacing:-0.04px">Local <u>H</u>istory</div>
<svg style="left:684.5px;top:839.0px" width="6" height="9" viewBox="0 0 6 9"><path d="M1.2 1 L4.8 4.5 L1.2 8" fill="none" stroke="#9fa2aa" stroke-width="1.05" stroke-linecap="round" stroke-linejoin="round"/></svg>
<div class="mi" style="top:857.5px;letter-spacing:-0.30px"><u>G</u>it</div>
<svg style="left:684.5px;top:860.5px" width="6" height="9" viewBox="0 0 6 9"><path d="M1.2 1 L4.8 4.5 L1.2 8" fill="none" stroke="#9fa2aa" stroke-width="1.05" stroke-linecap="round" stroke-linejoin="round"/></svg>
<div class="mi" style="top:878.5px;letter-spacing:-0.04px">GitToolBox</div>
<svg style="left:684.5px;top:881.5px" width="6" height="9" viewBox="0 0 6 9"><path d="M1.2 1 L4.8 4.5 L1.2 8" fill="none" stroke="#9fa2aa" stroke-width="1.05" stroke-linecap="round" stroke-linejoin="round"/></svg>
<div class="sep" style="top:899.5px"></div>
<div style="left:699.5px;top:310px;width:94px;height:91.5px;background:#2b2d30;border:1px solid #3e4045;border-radius:5px;box-shadow:0 3px 12px rgba(0,0,0,.5)"></div>
<div  style="left:686px;top:310px;width:14px;height:21.5px;background:#2a488b;"></div>
<div  style="left:700.5px;top:310.8px;width:92px;height:21.4px;background:#28468a;border-radius:4px 4px 0 0"></div>
<div  style="left:699.6px;top:310.5px;width:1px;height:21.5px;background:#253a6b;"></div>
<svg style="left:684.5px;top:318.0px" width="6" height="9" viewBox="0 0 6 9"><path d="M1.2 1 L4.8 4.5 L1.2 8" fill="none" stroke="#5f7cbd" stroke-width="1.05" stroke-linecap="round" stroke-linejoin="round"/></svg>
<div class="t" style="font-size:10.5px;color:#dfe1e5;font-family:'Liberation Sans','Noto Sans CJK SC',sans-serif;left:711.5px;line-height:14px;top:316.0px">解释代码</div>
<div class="t" style="font-size:10.5px;color:#dfe1e5;font-family:'Liberation Sans','Noto Sans CJK SC',sans-serif;left:711.5px;line-height:14px;top:337.5px">优化代码</div>
<div class="t" style="font-size:10.5px;color:#dfe1e5;font-family:'Liberation Sans','Noto Sans CJK SC',sans-serif;left:711.5px;line-height:14px;top:358.8px">单元测试</div>
<div class="t" style="font-size:10.5px;color:#dfe1e5;font-family:'Liberation Sans','Noto Sans CJK SC',sans-serif;left:711.5px;line-height:14px;top:380.1px">神医代码审查</div>
<div style="left:684.2px;top:307.8px;width:120px;height:24.6px;border:2.2px solid #e4544a;border-radius:4.5px"></div>
<div class="t" style="left:410.6px;top:265.8px;font-size:9.8px;color:#ced0d6;font-family:'Noto Sans CJK SC',sans-serif;font-weight:500;line-height:11px">文</div>
<div class="t" style="left:418px;top:271.4px;font-size:8.6px;color:#3d93e0;font-weight:bold;font-style:normal;font-family:'Liberation Sans',sans-serif;line-height:9px;text-shadow:0 0 1px #2b2d30">A</div>
<div class="t" style="left:410.6px;top:287.3px;font-size:9.8px;color:#ced0d6;font-family:'Noto Sans CJK SC',sans-serif;font-weight:500;line-height:11px">文</div>
<div class="t" style="left:418px;top:292.9px;font-size:8.6px;color:#3d93e0;font-weight:bold;font-style:italic;font-family:'Liberation Sans',sans-serif;line-height:9px;text-shadow:0 0 1px #2b2d30">R</div>
<svg style="left:411px;top:358.5px" width="13" height="14" viewBox="0 0 13 14"><path d="M6.4 1.4 C3.8 1.4 2.4 3.2 2.4 5.2 C2.4 6.8 3.4 7.6 4.2 8.6 V10 H8.6 V8.6 C9.4 7.6 10.4 6.8 10.4 5.2 C10.4 3.2 9 1.4 6.4 1.4Z" fill="none" stroke="#ced0d6" stroke-width="1.15"/><path d="M4.6 11.8 H8.2" stroke="#ced0d6" stroke-width="1.1"/></svg>
<svg style="left:411px;top:387px" width="14" height="13" viewBox="0 0 14 13"><rect x="5.2" y="1.4" width="3.6" height="10.4" fill="#f2a833"/><path d="M1 3.4 H4.2 M2.8 1.8 L4.4 3.4 L2.8 5" fill="none" stroke="#dfe1e5" stroke-width="1"/><circle cx="10.8" cy="10.4" r="1.1" fill="#dfe1e5"/></svg>
<svg style="left:411.5px;top:417px" width="12" height="12" viewBox="0 0 12 12"><circle cx="2.9" cy="3" r="1.7" fill="none" stroke="#ced0d6" stroke-width="1.1"/><circle cx="2.9" cy="9" r="1.7" fill="none" stroke="#ced0d6" stroke-width="1.1"/><path d="M4.3 4 L10.8 8.6 M4.3 8 L10.8 3.4" stroke="#ced0d6" stroke-width="1.1" stroke-linecap="round"/></svg>
<svg style="left:411.5px;top:437.5px" width="12" height="13" viewBox="0 0 12 13"><rect x="1.2" y="3" width="8" height="8.4" rx="1.6" fill="none" stroke="#ced0d6" stroke-width="1.1"/><path d="M3.4 1.2 H9.4 C10.4 1.2 11 1.8 11 2.8 V9" fill="none" stroke="#ced0d6" stroke-width="1.1"/><path d="M3.6 6 H6.8 M3.6 8.4 H6.8" stroke="#ced0d6" stroke-width="1"/></svg>
<svg style="left:411.5px;top:459.5px" width="12" height="13" viewBox="0 0 12 13"><rect x="1.3" y="1.6" width="9.6" height="10" rx="1.8" fill="none" stroke="#ced0d6" stroke-width="1.15"/><path d="M3.8 4.6 H8.4 M3.8 6.7 H8.4 M3.8 8.8 H8.4" stroke="#ced0d6" stroke-width="1"/></svg>
<div class="t" style="left:411.2px;top:733.7px;font-size:14.5px;color:#3a97c9;font-weight:bold;font-style:italic;font-family:'Liberation Sans',sans-serif;line-height:15px">m</div>
<div class="t" style="left:411.2px;top:755.2px;font-size:14.5px;color:#3a97c9;font-weight:bold;font-style:italic;font-family:'Liberation Sans',sans-serif;line-height:15px">m</div>
<svg style="left:417.5px;top:743px" width="8" height="8" viewBox="0 0 8 8"><path d="M1 0.6 L7 3.9 L1 7.2Z" fill="#c4c6cb" stroke="#2b2d30" stroke-width="0.8"/></svg>
<svg style="left:417.5px;top:765px" width="8" height="8" viewBox="0 0 8 8"><circle cx="4" cy="4.4" r="2.9" fill="#c4c6cb" stroke="#2b2d30" stroke-width="0.8"/><path d="M2.6 1 L4 2.2 L5.4 1 M1 4.4 H7" stroke="#c4c6cb" stroke-width="0.8" fill="none"/><path d="M4 2.6 V6.6" stroke="#2b2d30" stroke-width="0.7"/></svg>
<svg style="left:411.5px;top:779.5px" width="14" height="14" viewBox="0 0 14 14"><rect x="0.5" y="0.5" width="9" height="8" rx="0.8" fill="#c4c6cb"/><path d="M2.2 2.4 L4.4 4.4 L2.2 6.4" fill="none" stroke="#2b2d30" stroke-width="1.1"/><path d="M5.2 6.6 H7.6" stroke="#2b2d30" stroke-width="1"/></svg>
<div class="t" style="left:416.5px;top:783.5px;font-size:9.5px;color:#3a97c9;font-weight:bold;font-style:italic;font-family:'Liberation Sans',sans-serif;line-height:10px;text-shadow:0 0 1px #2b2d30">m</div>
<svg style="left:413px;top:906px" width="10" height="6" viewBox="0 0 10 6"><circle cx="5" cy="5.4" r="4" fill="none" stroke="#ced0d6" stroke-width="1.1"/></svg>
<div class="t" style="left:1558px;top:858.2px;font-size:24.8px;color:#e4e4e4;line-height:28px;font-family:'Liberation Sans','Noto Sans CJK SC',sans-serif;text-shadow:0 0 2px rgba(0,0,0,.5)">掘金技术社区 @ 京东云开发者</div>
</div>
</body></html>
